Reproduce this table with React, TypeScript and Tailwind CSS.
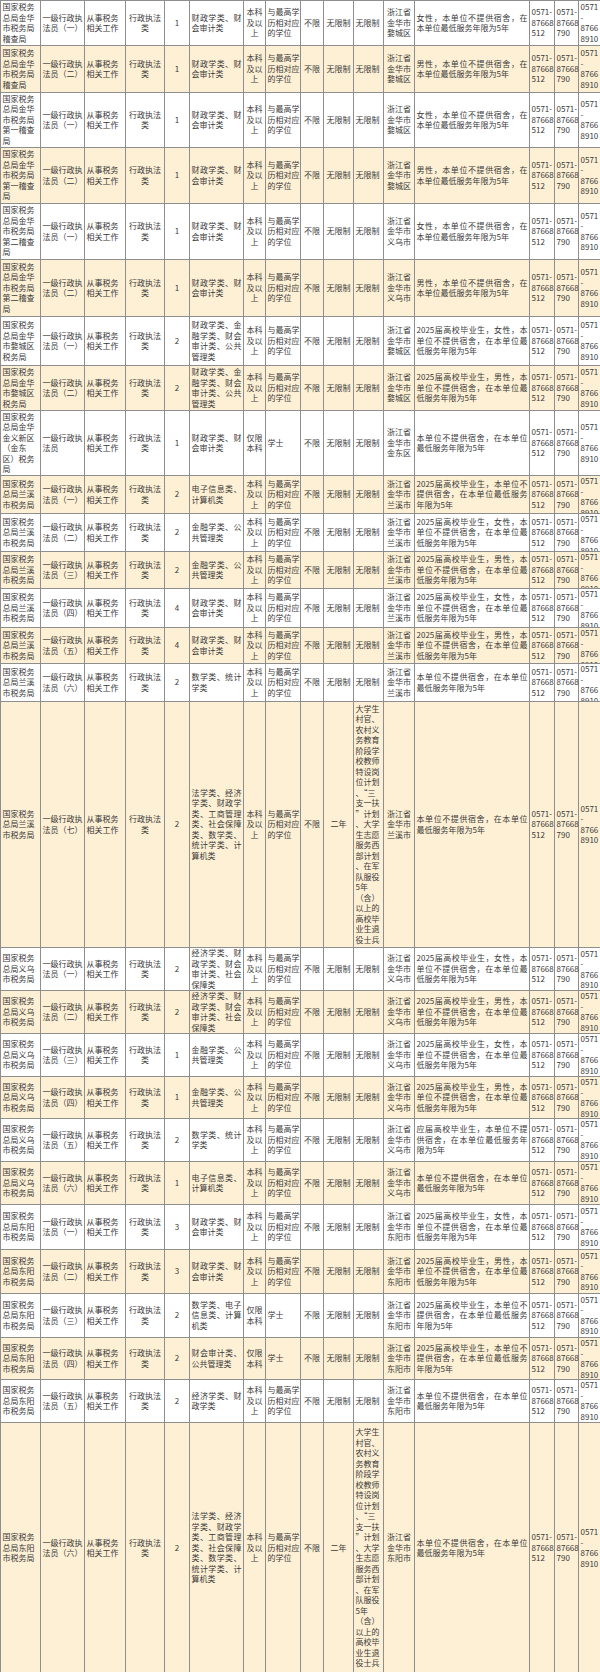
type Align = "left" | "center" | "justify";

interface Row {
  h: string;
  clip: string;
  unit: string;
  pos: string;
  num: string;
  major: string;
  edu: string;
  degree: string;
  years: string;
  project: string;
  place: string;
  note: string;
}

// 列宽（像素）
const colWidths = [
  "w-[40px]",
  "w-[44px]",
  "w-[41px]",
  "w-[39px]",
  "w-[25px]",
  "w-[54px]",
  "w-[22px]",
  "w-[35px]",
  "w-[23px]",
  "w-[30px]",
  "w-[30px]",
  "w-[31px]",
  "w-[115px]",
  "w-[25px]",
  "w-[24px]",
  "w-[22px]",
];

const colAlign: Align[] = [
  "left",
  "left",
  "left",
  "center",
  "center",
  "justify",
  "center",
  "left",
  "center",
  "center",
  "left",
  "center",
  "justify",
  "left",
  "left",
  "left",
];

const JICHA = "国家税务\n总局金华\n市税务局\n稽查局";
const JICHA1 = "国家税务\n总局金华\n市税务局\n第一稽查\n局";
const JICHA2 = "国家税务\n总局金华\n市税务局\n第二稽查\n局";
const WUCHENG = "国家税务\n总局金华\n市婺城区\n税务局";
const JINDONG = "国家税务\n总局金华\n金义新区\n（金东\n区）税务\n局";
const LANXI = "国家税务\n总局兰溪\n市税务局";
const YIWU = "国家税务\n总局义乌\n市税务局";
const DONGYANG = "国家税务\n总局东阳\n市税务局";

const EDU = "本科\n及以\n上";
const ONLY = "仅限\n本科";
const DEG = "与最高学\n历相对应\n的学位";
const XUESHI = "学士";
const NOLIMIT = "无限制";

const FIN = "财政学类、财\n会审计类";
const FIN4 = "财政学类、金\n融学类、财会\n审计类、公共\n管理类";
const FINPUB = "金融学类、公\n共管理类";
const ELEC = "电子信息类、\n计算机类";
const MATH = "数学类、统计\n学类";
const ECON4 = "经济学类、财\n政学类、财会\n审计类、社会\n保障类";
const WIDE =
  "法学类、经济\n学类、财政学\n类、工商管理\n类、社会保障\n类、数学类、\n统计学类、计\n算机类";

const LONG =
  "大学生\n村官、\n农村义\n务教育\n阶段学\n校教师\n特设岗\n位计划\n、“三\n支一扶\n”计划\n、大学\n生志愿\n服务西\n部计划\n、在军\n队服役\n5年\n（含）\n以上的\n高校毕\n业生退\n役士兵";

const F_OLD = "女性，本单位不提供宿舍，在\n本单位最低服务年限为5年";
const M_OLD = "男性，本单位不提供宿舍，在\n本单位最低服务年限为5年";
const G25F = "2025届高校毕业生，女性，本\n单位不提供宿舍，在本单位最\n低服务年限为5年";
const G25M = "2025届高校毕业生，男性，本\n单位不提供宿舍，在本单位最\n低服务年限为5年";
const G25 = "2025届高校毕业生，本单位不\n提供宿舍，在本单位最低服务\n年限为5年";
const PLAIN = "本单位不提供宿舍，在本单位\n最低服务年限为5年";
const YINGJIE = "应届高校毕业生，本单位不提\n供宿舍，在本单位最低服务年\n限为5年";

const WU = "浙江省\n金华市\n婺城区";
const YW = "浙江省\n金华市\n义乌市";
const JD = "浙江省\n金华市\n金东区";
const LX = "浙江省\n金华市\n兰溪市";
const DY = "浙江省\n金华市\n东阳市";

const p = (n: string) => `一级行政执\n法员（${n}）`;

const rows: Row[] = [
  { h: "h-[45px]", clip: "max-h-[44px]", unit: JICHA, pos: p("一"), num: "1", major: FIN, edu: EDU, degree: DEG, years: NOLIMIT, project: NOLIMIT, place: WU, note: F_OLD },
  { h: "h-[47px]", clip: "max-h-[46px]", unit: JICHA, pos: p("二"), num: "1", major: FIN, edu: EDU, degree: DEG, years: NOLIMIT, project: NOLIMIT, place: WU, note: M_OLD },
  { h: "h-[55px]", clip: "max-h-[54px]", unit: JICHA1, pos: p("一"), num: "1", major: FIN, edu: EDU, degree: DEG, years: NOLIMIT, project: NOLIMIT, place: WU, note: F_OLD },
  { h: "h-[56px]", clip: "max-h-[55px]", unit: JICHA1, pos: p("二"), num: "1", major: FIN, edu: EDU, degree: DEG, years: NOLIMIT, project: NOLIMIT, place: WU, note: M_OLD },
  { h: "h-[56px]", clip: "max-h-[55px]", unit: JICHA2, pos: p("一"), num: "1", major: FIN, edu: EDU, degree: DEG, years: NOLIMIT, project: NOLIMIT, place: YW, note: F_OLD },
  { h: "h-[57px]", clip: "max-h-[56px]", unit: JICHA2, pos: p("二"), num: "1", major: FIN, edu: EDU, degree: DEG, years: NOLIMIT, project: NOLIMIT, place: YW, note: M_OLD },
  { h: "h-[49px]", clip: "max-h-[48px]", unit: WUCHENG, pos: p("一"), num: "2", major: FIN4, edu: EDU, degree: DEG, years: NOLIMIT, project: NOLIMIT, place: WU, note: G25F },
  { h: "h-[45px]", clip: "max-h-[44px]", unit: WUCHENG, pos: p("二"), num: "2", major: FIN4, edu: EDU, degree: DEG, years: NOLIMIT, project: NOLIMIT, place: WU, note: G25M },
  { h: "h-[65px]", clip: "max-h-[64px]", unit: JINDONG, pos: "一级行政执\n法员", num: "1", major: FIN, edu: ONLY, degree: XUESHI, years: NOLIMIT, project: NOLIMIT, place: JD, note: PLAIN },
  { h: "h-[38px]", clip: "max-h-[37px]", unit: LANXI, pos: p("一"), num: "2", major: ELEC, edu: EDU, degree: DEG, years: NOLIMIT, project: NOLIMIT, place: LX, note: G25 },
  { h: "h-[38px]", clip: "max-h-[37px]", unit: LANXI, pos: p("二"), num: "2", major: FINPUB, edu: EDU, degree: DEG, years: NOLIMIT, project: NOLIMIT, place: LX, note: G25F },
  { h: "h-[37px]", clip: "max-h-[36px]", unit: LANXI, pos: p("三"), num: "2", major: FINPUB, edu: EDU, degree: DEG, years: NOLIMIT, project: NOLIMIT, place: LX, note: G25M },
  { h: "h-[39px]", clip: "max-h-[38px]", unit: LANXI, pos: p("四"), num: "4", major: FIN, edu: EDU, degree: DEG, years: NOLIMIT, project: NOLIMIT, place: LX, note: G25F },
  { h: "h-[36px]", clip: "max-h-[35px]", unit: LANXI, pos: p("五"), num: "4", major: FIN, edu: EDU, degree: DEG, years: NOLIMIT, project: NOLIMIT, place: LX, note: G25M },
  { h: "h-[38px]", clip: "max-h-[37px]", unit: LANXI, pos: p("六"), num: "2", major: MATH, edu: EDU, degree: DEG, years: NOLIMIT, project: NOLIMIT, place: LX, note: PLAIN },
  { h: "h-[246px]", clip: "max-h-[245px]", unit: LANXI, pos: p("七"), num: "2", major: WIDE, edu: EDU, degree: DEG, years: "二年", project: LONG, place: LX, note: PLAIN },
  { h: "h-[42px]", clip: "max-h-[41px]", unit: YIWU, pos: p("一"), num: "2", major: ECON4, edu: EDU, degree: DEG, years: NOLIMIT, project: NOLIMIT, place: YW, note: G25F },
  { h: "h-[43px]", clip: "max-h-[42px]", unit: YIWU, pos: p("二"), num: "2", major: ECON4, edu: EDU, degree: DEG, years: NOLIMIT, project: NOLIMIT, place: YW, note: G25M },
  { h: "h-[43px]", clip: "max-h-[42px]", unit: YIWU, pos: p("三"), num: "1", major: FINPUB, edu: EDU, degree: DEG, years: NOLIMIT, project: NOLIMIT, place: YW, note: G25F },
  { h: "h-[42px]", clip: "max-h-[41px]", unit: YIWU, pos: p("四"), num: "1", major: FINPUB, edu: EDU, degree: DEG, years: NOLIMIT, project: NOLIMIT, place: YW, note: G25M },
  { h: "h-[43px]", clip: "max-h-[42px]", unit: YIWU, pos: p("五"), num: "2", major: MATH, edu: EDU, degree: DEG, years: NOLIMIT, project: NOLIMIT, place: YW, note: YINGJIE },
  { h: "h-[43px]", clip: "max-h-[42px]", unit: YIWU, pos: p("六"), num: "1", major: ELEC, edu: EDU, degree: DEG, years: NOLIMIT, project: NOLIMIT, place: YW, note: PLAIN },
  { h: "h-[45px]", clip: "max-h-[44px]", unit: DONGYANG, pos: p("一"), num: "3", major: FIN, edu: EDU, degree: DEG, years: NOLIMIT, project: NOLIMIT, place: DY, note: G25F },
  { h: "h-[44px]", clip: "max-h-[43px]", unit: DONGYANG, pos: p("二"), num: "3", major: FIN, edu: EDU, degree: DEG, years: NOLIMIT, project: NOLIMIT, place: DY, note: G25M },
  { h: "h-[44px]", clip: "max-h-[43px]", unit: DONGYANG, pos: p("三"), num: "2", major: "数学类、电子\n信息类、计算\n机类", edu: ONLY, degree: XUESHI, years: NOLIMIT, project: NOLIMIT, place: DY, note: G25 },
  { h: "h-[42px]", clip: "max-h-[41px]", unit: DONGYANG, pos: p("四"), num: "2", major: "财会审计类、\n公共管理类", edu: ONLY, degree: XUESHI, years: NOLIMIT, project: NOLIMIT, place: DY, note: G25 },
  { h: "h-[43px]", clip: "max-h-[42px]", unit: DONGYANG, pos: p("五"), num: "2", major: "经济学类、财\n政学类", edu: EDU, degree: DEG, years: NOLIMIT, project: NOLIMIT, place: DY, note: PLAIN },
  { h: "h-[251px]", clip: "max-h-[250px]", unit: DONGYANG, pos: p("六"), num: "2", major: WIDE, edu: EDU, degree: DEG, years: "二年", project: LONG, place: DY, note: PLAIN },
];

function Lines({ text, align }: { text: string; align: Align }) {
  const lines = text.split("\n");
  return (
    <div className="px-[1.5px]">
      {lines.map((line, i) => {
        let cls = "whitespace-nowrap text-left";
        if (align === "center") cls = "whitespace-nowrap text-center";
        if (align === "justify" && i < lines.length - 1)
          cls = "whitespace-nowrap text-justify [text-align-last:justify]";
        return (
          <div key={i} className={cls}>
            {line}
          </div>
        );
      })}
    </div>
  );
}

export default function App() {
  return (
    <div className="w-[600px] h-[1672px] overflow-hidden bg-white font-['Noto_Sans_CJK_SC','Noto_Sans',sans-serif] text-[8px] leading-[10.5px] text-[#3a3a3a]">
      <table className="w-[600px] table-fixed border-collapse">
        <colgroup>
          {colWidths.map((w, i) => (
            <col key={i} className={w} />
          ))}
        </colgroup>
        <tbody>
          {rows.map((r, i) => {
            const cells = [
              r.unit,
              r.pos,
              "从事税务\n相关工作",
              "行政执法\n类",
              r.num,
              r.major,
              r.edu,
              r.degree,
              "不限",
              r.years,
              r.project,
              r.place,
              r.note,
              "0571-\n87668\n512",
              "0571-\n87668\n790",
            ];
            return (
              <tr
                key={i}
                className={`${r.h} ${i % 2 === 1 ? "bg-[#fdf0d4]" : "bg-white"}`}
              >
                {cells.map((c, j) => (
                  <td
                    key={j}
                    className="border border-[#8e8e8e] p-0 align-middle"
                  >
                    <Lines text={c} align={colAlign[j]} />
                  </td>
                ))}
                <td className="border border-[#8e8e8e] p-0 align-middle">
                  <div className={`${r.clip} overflow-hidden`}>
                    <Lines text={"0571\n-\n8766\n8910"} align="left" />
                  </div>
                </td>
              </tr>
            );
          })}
        </tbody>
      </table>
    </div>
  );
}
